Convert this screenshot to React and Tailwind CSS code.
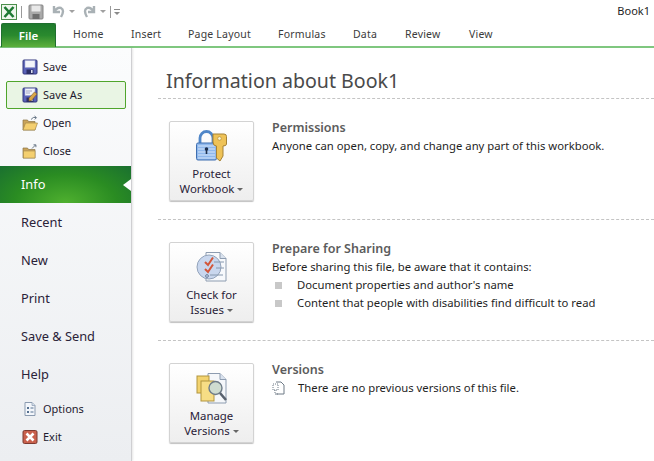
import React from "react";

function SaveIcon({ pen }) {
  return (
    <svg width="16" height="16" viewBox="0 0 16 16">
      <rect x="1" y="1" width="14" height="14" rx="1" fill="#5a62b8" stroke="#34387e" />
      <rect x="3" y="1.5" width="10" height="7" fill="#f2f4fa" stroke="#9aa0cc" strokeWidth="0.5" />
      <rect x="4.5" y="10.5" width="7" height="4.5" fill="#2c2f66" />
      <rect x="9" y="11" width="1.6" height="3" fill="#d8dcf0" />
      {pen && <path d="M4 4 H10 M4 6 H8" stroke="#8a90b8" strokeWidth="0.8" />}
      {pen && <path d="M7 11 L12.5 5 L15 7 L9.5 13.5 L7 14 Z" fill="#d9a648" stroke="#7b5a28" strokeWidth="0.6" />}
    </svg>
  );
}

function FolderIcon({ variant }) {
  return (
    <svg width="16" height="16" viewBox="0 0 16 16">
      <path d="M1 5 H5.5 L6.5 6.5 H13 V15 H1 Z" fill="#c9a35a" stroke="#8a7242" strokeWidth="0.7" />
      {variant === "open" ? (
        <path d="M3.5 8 H15.5 L13 15 H1 Z" fill="#f4cf6f" stroke="#a58a4c" strokeWidth="0.7" />
      ) : (
        <rect x="1.5" y="8" width="11.5" height="7" fill="#f4cf6f" stroke="#a58a4c" strokeWidth="0.6" />
      )}
      {variant === "open" ? (
        <path d="M9 4.5 Q11 1.5 14 2.5 M12.5 1 L14.5 2.6 L12.8 4.4" fill="none" stroke="#5b6b7c" strokeWidth="0.9" />
      ) : (
        <path d="M10 5.5 L13.5 2 M11.5 1.8 H13.9 V4.2" fill="none" stroke="#5b6b7c" strokeWidth="0.9" />
      )}
    </svg>
  );
}

function OptionsIcon() {
  return (
    <svg width="16" height="16" viewBox="0 0 16 16">
      <path d="M3 1.5 H10 L13 4.5 V14.5 H3 Z" fill="#f3f6fb" stroke="#8b9bb0" />
      <path d="M10 1.5 V4.5 H13" fill="#d4deeb" stroke="#8b9bb0" strokeWidth="0.7" />
      <rect x="5" y="6" width="2" height="2" fill="#55708f" />
      <rect x="5" y="10" width="2" height="2" fill="#55708f" />
      <path d="M8.5 7 H11.5 M8.5 11 H11.5" stroke="#55708f" />
    </svg>
  );
}

function ExitIcon() {
  return (
    <svg width="16" height="16" viewBox="0 0 16 16">
      <rect x="1" y="1.5" width="14" height="13" rx="1.5" fill="#c9604c" stroke="#7d3a30" />
      <path d="M4.5 4.5 L11.5 11.5 M11.5 4.5 L4.5 11.5" stroke="#fff" strokeWidth="2.6" />
    </svg>
  );
}

function SmallRow({ icon, label, boxed }) {
  return (
    <div className={`flex h-[28px] items-center ${boxed ? "ml-[6px] mr-[5px] rounded-[2px] border border-[#4fa52c] bg-[#e9f5e4] pl-[15px]" : "pl-[22px]"}`}>
      <span className="flex w-[21px] shrink-0">{icon}</span>
      <span className="text-[11px] text-[#1e1a2e]">{label}</span>
    </div>
  );
}

function BigRow({ label }) {
  return (
    <div className="flex h-[38px] items-center pl-[21px] text-[12.8px] text-[#2a2238]">{label}</div>
  );
}

function LockIcon() {
  return (
    <svg width="32" height="32" viewBox="0 0 32 32">
      <path d="M4 14 V8 A6.5 6.5 0 0 1 17 8 V14" fill="none" stroke="#4f86c8" strokeWidth="2.8" />
      <rect x="0.5" y="13" width="20" height="17" rx="1.5" fill="#8fb8ec" stroke="#3f6fb0" />
      <path d="M2 16 H19 M2 19 H19 M2 22 H19 M2 25 H19 M2 28 H19" stroke="#d6e6fa" />
      <circle cx="10.5" cy="19" r="1.8" fill="#1d2f4c" />
      <rect x="9.7" y="19" width="1.6" height="5" fill="#1d2f4c" />
      <path d="M17 4 H28 Q30.5 4 30.5 6.5 V14 Q30.5 16 27 16 V26 L24 31 L20.5 28 V16 Q17 16 17 12 Z" fill="#eec257" stroke="#a58236" />
      <circle cx="23.5" cy="8.5" r="1.8" fill="#fdf5d0" stroke="#a58236" strokeWidth="0.6" />
    </svg>
  );
}

function CheckIcon() {
  return (
    <svg width="32" height="32" viewBox="0 0 32 32">
      <path d="M10 1.5 H24 L30 7.5 V30 H10 Z" fill="#f7f9fc" stroke="#8d9cb0" />
      <path d="M24 1.5 V7.5 H30" fill="#d9e2ee" stroke="#8d9cb0" />
      <circle cx="13" cy="16" r="12" fill="#c9d7ee" stroke="#93a3ba" />
      <path d="M18 11 H28 M20 17 H28 M14 24 H27" stroke="#8698ae" />
      <path d="M9 11 L12 14 L17 6.5" fill="none" stroke="#d2563a" strokeWidth="2" />
      <path d="M9 18 L12 21 L17 13.5" fill="none" stroke="#d2563a" strokeWidth="2" />
      <circle cx="11" cy="25" r="1.4" fill="none" stroke="#6c7f9a" />
    </svg>
  );
}

function VersionsIcon() {
  return (
    <svg width="32" height="32" viewBox="0 0 32 32">
      <path d="M12 1.5 H24 L30 7.5 V31 H12 Z" fill="#f5f7fa" stroke="#8d9cb0" />
      <path d="M24 1.5 V7.5 H30" fill="#d9e2ee" stroke="#8d9cb0" />
      <rect x="1" y="4" width="12" height="17" fill="#f3d36f" stroke="#b2953f" />
      <rect x="5" y="9" width="13" height="20" fill="#f7dd85" stroke="#b2953f" />
      <circle cx="19.5" cy="16" r="6.5" fill="#cfdcd0" stroke="#6f7c88" strokeWidth="1.4" />
      <path d="M24 21 L30 28" stroke="#59626e" strokeWidth="2.6" />
    </svg>
  );
}

function BigButton({ icon, l1, l2 }) {
  return (
    <div className="flex h-[80px] w-[85px] shrink-0 flex-col items-center rounded-[2px] border border-[#d3d3d3] bg-gradient-to-b from-[#ffffff] to-[#eeeeee] pt-[8px] shadow-[0_1px_1px_rgba(0,0,0,0.25)]">
      <div className="flex h-[32px] items-center">{icon}</div>
      <div className="mt-[4px] text-center text-[11.4px] leading-[15px] text-[#2a2238]">
        <div>{l1}</div>
        <div className="flex items-center justify-center">
          {l2}
          <span className="ml-[3px] mt-[2px] h-0 w-0 border-x-[3px] border-t-[3px] border-x-transparent border-t-[#666666]" />
        </div>
      </div>
    </div>
  );
}

function Section({ icon, l1, l2, title, last, children }) {
  return (
    <div className={`flex h-[121px] items-start pl-[11px] pt-[22px] ${last ? "" : "border-b border-dashed border-[#c4c4c4]"}`}>
      <BigButton icon={icon} l1={l1} l2={l2} />
      <div className="ml-[18px] mt-[-2px] text-[11.3px] leading-[18px] text-[#1f1f1f]">
        <div className="text-[12.5px] font-semibold text-[#5c5c5c]">{title}</div>
        {children}
      </div>
    </div>
  );
}

function Bullet({ children }) {
  return (
    <div className="flex items-center">
      <span className="ml-[3px] h-[7px] w-[7px] bg-[#c8c8c8]" />
      <span className="ml-[15px]">{children}</span>
    </div>
  );
}

const tabs = [
  ["Home", "w-[58px]"],
  ["Insert", "w-[57px]"],
  ["Page Layout", "w-[90px]"],
  ["Formulas", "w-[75px]"],
  ["Data", "w-[52px]"],
  ["Review", "w-[64px]"],
  ["View", "w-[40px]"],
];

export default function App() {
  return (
    <div className="flex h-[461px] w-[654px] flex-col overflow-hidden bg-white font-['Noto_Sans',sans-serif]">
      <div className="flex h-[23px] items-center pl-[1px] pr-[4px]">
        <svg width="16" height="16" viewBox="0 0 16 16">
          <rect x="0.5" y="0.5" width="15" height="15" fill="#eef6ec" stroke="#4c8f4c" />
          <path d="M3.5 3 L12.5 13 M12.5 3 L3.5 13" stroke="#1e7a33" strokeWidth="2.6" />
        </svg>
        <span className="ml-[4px] h-[12px] w-px bg-[#9a9a9a]" />
        <svg className="ml-[6px]" width="16" height="16" viewBox="0 0 16 16">
          <rect x="1" y="1" width="14" height="14" rx="1" fill="#a9a9a9" stroke="#858585" />
          <rect x="3.5" y="1.5" width="9" height="6" fill="#e8e8e8" />
          <rect x="4.5" y="10" width="7" height="5" fill="#6e6e6e" />
        </svg>
        <svg className="ml-[7px]" width="16" height="16" viewBox="0 0 16 16">
          <path d="M3 2 V8 H9 M3 8 Q6 3 10 4 Q14 6 10 13" fill="none" stroke="#a9b1b5" strokeWidth="2.4" />
        </svg>
        <span className="ml-[2px] h-0 w-0 border-x-[3px] border-t-[3px] border-x-transparent border-t-[#a0a0a0]" />
        <svg className="ml-[6px]" width="16" height="16" viewBox="0 0 16 16">
          <path d="M13 2 V8 H7 M13 8 Q10 3 6 4 Q2 6 6 13" fill="none" stroke="#a9b1b5" strokeWidth="2.4" />
        </svg>
        <span className="ml-[3px] h-0 w-0 border-x-[3px] border-t-[3px] border-x-transparent border-t-[#a0a0a0]" />
        <span className="ml-[4px] h-[12px] w-px bg-[#9a9a9a]" />
        <span className="ml-[3px] flex flex-col items-center gap-[2px]">
          <span className="h-px w-[6px] bg-[#8a8a8a]" />
          <span className="h-0 w-0 border-x-[3px] border-t-[3px] border-x-transparent border-t-[#8a8a8a]" />
        </span>
        <span className="ml-auto text-[11px] text-[#1f1f1f]">Book1</span>
      </div>
      <div className="flex h-[25px] shrink-0 items-stretch border-b-[2px] border-[#7fc77f] pl-[1px]">
        <div className="flex h-[24px] w-[55px] items-center justify-center rounded-t-[2px] border border-b-0 border-[#1f6f2e] bg-gradient-to-b from-[#1e7a2c] via-[#2a8a2e] to-[#5cb03c] text-[11.5px] font-semibold text-white">File</div>
        <div className="ml-[17px] flex">
          {tabs.map(([t, w]) => (
            <div key={t} className={`${w} pt-[4px] text-[10.5px] tracking-[0.2px] text-[#3b3b3b]`}>{t}</div>
          ))}
        </div>
      </div>
      <div className="flex min-h-0 flex-1">
        <div className="w-[132px] shrink-0 border-r border-[#cfcfd2] bg-gradient-to-b from-[#fbfcfd] to-[#eceef1] pt-[5px] shadow-[1px_0_2px_rgba(0,0,0,0.1)]">
          <SmallRow icon={<SaveIcon />} label="Save" />
          <SmallRow icon={<SaveIcon pen />} label="Save As" boxed />
          <SmallRow icon={<FolderIcon variant="open" />} label="Open" />
          <SmallRow icon={<FolderIcon />} label="Close" />
          <div className="relative mt-[1px] flex h-[37px] items-center bg-[radial-gradient(ellipse_at_50%_100%,#4fb02f,#2a8c22_55%,#1a7030)] pl-[21px] text-[12.8px] text-white">
            Info
            <span className="absolute right-0 top-[13px] h-0 w-0 border-y-[6px] border-r-[8px] border-y-transparent border-r-white" />
          </div>
          <div className="pt-px">
            <BigRow label="Recent" />
            <BigRow label="New" />
            <BigRow label="Print" />
            <BigRow label="Save & Send" />
            <BigRow label="Help" />
          </div>
          <div className="mt-px">
            <SmallRow icon={<OptionsIcon />} label="Options" />
            <SmallRow icon={<ExitIcon />} label="Exit" />
          </div>
        </div>
        <div className="min-w-0 flex-1 pl-[26px]">
          <div className="flex h-[51px] items-center border-b border-dashed border-[#c4c4c4] pl-[8px] pt-[15px] text-[19.6px] text-[#4a4a4a]">
            Information about Book1
          </div>
          <Section icon={<LockIcon />} l1="Protect" l2="Workbook" title="Permissions">
            <div>Anyone can open, copy, and change any part of this workbook.</div>
          </Section>
          <Section icon={<CheckIcon />} l1="Check for" l2="Issues" title="Prepare for Sharing">
            <div>Before sharing this file, be aware that it contains:</div>
            <Bullet>Document properties and author's name</Bullet>
            <Bullet>Content that people with disabilities find difficult to read</Bullet>
          </Section>
          <Section icon={<VersionsIcon />} l1="Manage" l2="Versions" title="Versions" last>
            <div className="flex items-center">
              <svg width="14" height="14" viewBox="0 0 14 14">
                <path d="M4 1 H9 L12 4 V13 H4" fill="#fff" stroke="#6e7a86" />
                <path d="M1 3 H6 V9 H1 Z M3 9 V13 H7" fill="none" stroke="#6e7a86" strokeDasharray="1 1" />
              </svg>
              <span className="ml-[12px]">There are no previous versions of this file.</span>
            </div>
          </Section>
        </div>
      </div>
    </div>
  );
}
